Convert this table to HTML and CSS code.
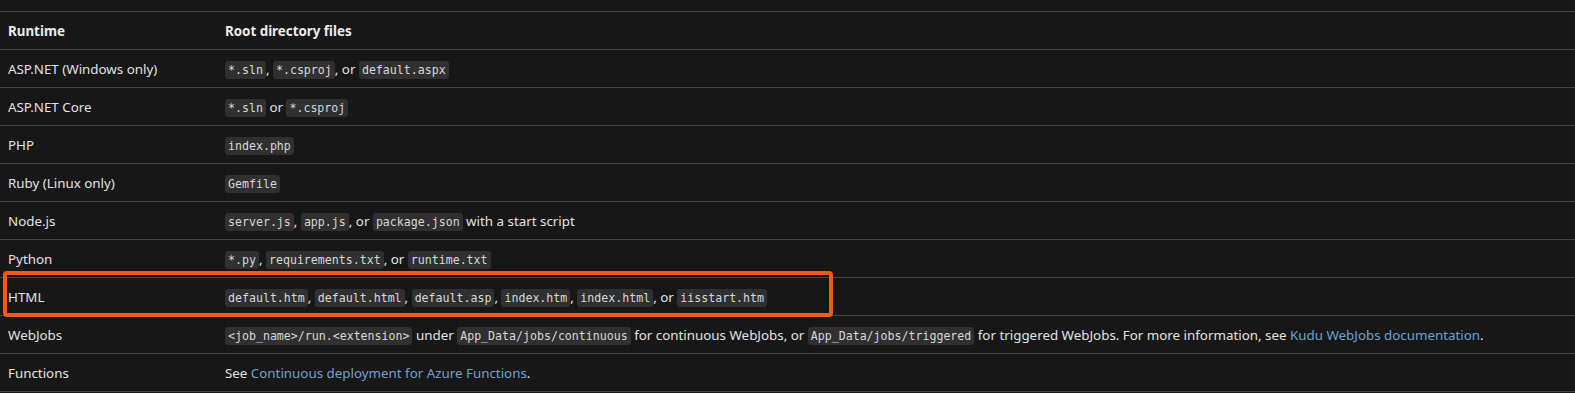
FILE: index.html
```html
<!DOCTYPE html>
<html lang="en">
<head>
<meta charset="utf-8">
<title>Root directory files</title>
<link rel="stylesheet" href="styles.css">
</head>
<body>
<div class="wrap">
<table class="files">
<thead>
<tr><th class="c1">Runtime</th><th>Root directory files</th></tr>
</thead>
<tbody>
<tr><td class="c1">ASP.NET (Windows only)</td><td><code>*.sln</code>, <code>*.csproj</code>, or <code>default.aspx</code></td></tr>
<tr><td class="c1">ASP.NET Core</td><td><code>*.sln</code> or <code>*.csproj</code></td></tr>
<tr><td class="c1">PHP</td><td><code>index.php</code></td></tr>
<tr><td class="c1">Ruby (Linux only)</td><td><code>Gemfile</code></td></tr>
<tr><td class="c1">Node.js</td><td><code>server.js</code>, <code>app.js</code>, or <code>package.json</code> with a start script</td></tr>
<tr><td class="c1">Python</td><td><code>*.py</code>, <code>requirements.txt</code>, or <code>runtime.txt</code></td></tr>
<tr class="hl"><td class="c1">HTML</td><td><code>default.htm</code>, <code>default.html</code>, <code>default.asp</code>, <code>index.htm</code>, <code>index.html</code>, or <code>iisstart.htm</code></td></tr>
<tr><td class="c1">WebJobs</td><td><code>&lt;job_name&gt;/run.&lt;extension&gt;</code> under <code>App_Data/jobs/continuous</code> for continuous WebJobs, or <code>App_Data/jobs/triggered</code> for triggered WebJobs. For more information, see <a href="#">Kudu WebJobs documentation</a>.</td></tr>
<tr><td class="c1">Functions</td><td>See <a href="#">Continuous deployment for Azure Functions</a>.</td></tr>
</tbody>
</table>
<div class="mark"></div>
</div>
</body>
</html>
```
FILE: styles.css
```css
html, body {
  margin: 0;
  padding: 0;
  background: #171717;
}
body {
  font-family: "Noto Sans", "Open Sans", sans-serif;
  font-size: 13.35px;
  color: #e2e2e2;
}
.wrap {
  position: relative;
  padding-top: 11px;
}
.files {
  width: 100%;
  border-collapse: collapse;
  border-bottom: 1px solid #444;
}
.files th, .files td {
  height: 37px;
  padding: 0 8px;
  border-top: 1px solid #444;
  text-align: left;
  vertical-align: middle;
  white-space: nowrap;
}
.files th {
  font-weight: 700;
  color: #ececec;
}
.files .c1 {
  width: 201px;
}
code {
  font-family: "DejaVu Sans Mono", monospace;
  font-size: 11.6px;
  background: #303030;
  color: #d8d8d8;
  padding: 2px 3px;
  border-radius: 3px;
}
a {
  color: #6fa1cf;
  text-decoration: none;
}
.mark {
  position: absolute;
  left: 3px;
  top: 271px;
  width: 822px;
  height: 38px;
  border: 4px solid #f05a14;
  border-radius: 4px;
}
```
